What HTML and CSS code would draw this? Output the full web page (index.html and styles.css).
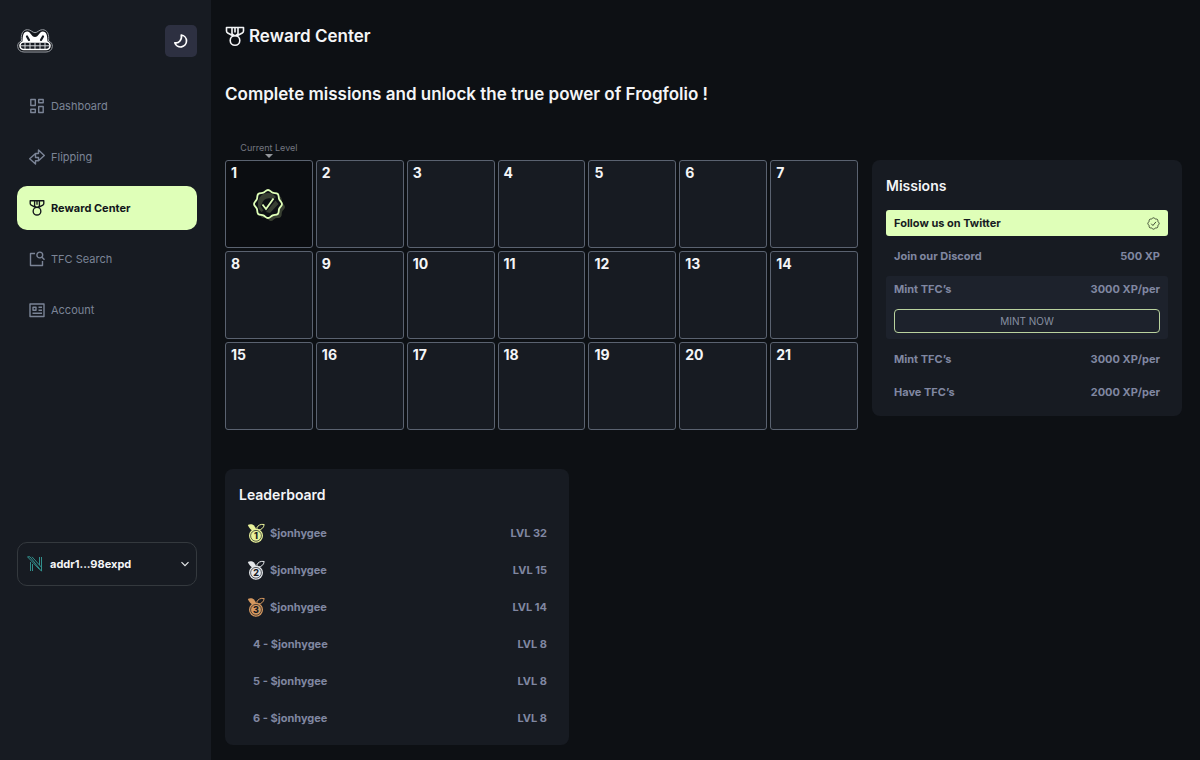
FILE: index.html
```html
<!DOCTYPE html>
<html lang="en">
<head>
<meta charset="utf-8">
<meta name="viewport" content="width=device-width, initial-scale=1">
<title>Reward Center</title>
<link rel="stylesheet" href="styles.css">
</head>
<body>
<svg class="symbols" aria-hidden="true">
  <symbol id="medal" viewBox="0 0 20 20">
    <path d="M1.500 1h17v3.500c0 1-.4 1.600-1.200 2L12.500 9h-5L2.700 6.500c-.8-.4-1.200-1-1.200-2zM7 1v6.500L9 9M13 1v6.500L11 9M10 1v5"/>
    <circle cx="10" cy="14" r="4.800"/>
  </symbol>
  <symbol id="seal" viewBox="0 0 32 32">
    <path d="M16 2c2 0 2.900 2 4.600 2.700s3.800-.1 5.200 1.300.6 3.500 1.300 5.200S30 14 30 16s-2.200 3.100-2.900 4.800.1 3.800-1.300 5.200-3.500.6-5.200 1.300S18 30 16 30s-2.900-2-4.600-2.700-3.800.1-5.200-1.300-.6-3.500-1.300-5.200S2 18 2 16s2.200-3.100 2.900-4.800S4.800 7.400 6.200 6s3.500-.6 5.200-1.300S14 2 16 2z"/>
  </symbol>
  <symbol id="award" viewBox="0 0 18 20">
    <path class="award-fill" d="M.8 2C2.500 .8 5.500 1 7 2.500L9 5.500 6 8C4 7 2 5 .8 2z"/>
    <path class="award-line" d="M17.200 1.500c-3.500-.6-6 .5-7.500 3.500l1.300 2C14.500 6.800 16.700 5 17.200 1.500z"/>
    <circle class="award-fill" cx="9" cy="12.800" r="7"/>
    <circle class="award-ring" cx="9" cy="12.800" r="5.400"/>
  </symbol>
</svg>
<div class="app">
  <aside class="sidebar">
    <div class="brand">
      <svg class="logo" viewBox="0 0 36 24" role="img" aria-label="Frogfolio">
        <path class="logo-edge" d="M4.500 12C3.500 5 6 .7 10.500 .7c3.500 0 5 3 7.500 3s4-3 7.500-3C30 .7 32.500 5 31.500 12c2.800 1 4 3 3.800 5.500C35 21 32.500 23 29 23H7C3.500 23 1 21 .7 17.500.5 15 1.700 13 4.500 12z"/>
        <path class="logo-face" d="M5.500 14C5.500 6 6.500 2.500 10.300 2.500c3.200 0 4.200 5.500 7.700 5.500s4.500-5.500 7.700-5.500c3.800 0 4.800 3.500 4.800 11.500z"/>
        <path class="logo-eye" d="M10 7.500l2 3.500M26 7.500l-2 3.500"/>
        <rect class="logo-mouth" x="3" y="13" width="30" height="7.500" rx="3.700"/>
        <path class="logo-teeth" d="M4 16.800h28M8 13.500v6.500M13 13.500v6.500M18 13.500v6.500M23 13.500v6.500M28 13.500v6.500"/>
      </svg>
      <button class="theme" type="button" aria-label="Toggle theme">
        <svg class="icon moon" viewBox="0 0 16 16"><path d="M8.300 2a6 6 0 1 1-6.500 7.800c4 1 7.500-3 6.500-7.800z"/></svg>
      </button>
    </div>
    <nav class="nav">
      <a class="nav-item" href="#">
        <svg class="icon" viewBox="0 0 16 16"><path d="M1.800 1.500h4.500v6H1.800zM9.700 1.500h4.500v3.200H9.700zM1.800 11.300h4.500v3.200H1.800zM9.700 8.500h4.500v6H9.700z"/></svg>
        Dashboard</a>
      <a class="nav-item" href="#">
        <svg class="icon" viewBox="0 0 16 16"><path d="M9.500 1v3.500H6.500L.7 9.800l5.800 5.200v-3.300h3l5.800-5.200zM6.500 4.500v4h3v3.200"/></svg>
        Flipping</a>
      <a class="nav-item nav-item-active" href="#" aria-current="page">
        <svg class="icon icon-medal"><use href="#medal"/></svg>
        Reward Center</a>
      <a class="nav-item" href="#">
        <svg class="icon" viewBox="0 0 16 16"><path d="M6 2.500H1.500v12h12V10"/><circle cx="10.800" cy="4" r="2.900"/><path d="M13 6.200l2.500 2.500"/></svg>
        TFC Search</a>
      <a class="nav-item" href="#">
        <svg class="icon" viewBox="0 0 16 16"><path d="M1 2h14v12.500H1zM4 5.200h3v3H4zM9.500 5.300H13M9.500 8.200H13M3.500 11.300H13"/></svg>
        Account</a>
    </nav>
    <button class="wallet" type="button">
      <svg class="wallet-logo" viewBox="0 0 16 16"><path d="M.5 .8l12 12.700M.5 .8h2.500l11.500 14.500M5 .8l9.500 10.500M3.500 6v9M5.500 8v7M12.500 1v8M14.500 1v14"/></svg>
      <span class="wallet-address">addr1...98expd</span>
      <svg class="chevron" viewBox="0 0 10 10"><path d="M1.500 3.200L5 6.700l3.500-3.500"/></svg>
    </button>
  </aside>

  <main class="main">
    <header class="title">
      <svg class="icon title-icon"><use href="#medal"/></svg>
      <h1>Reward Center</h1>
    </header>
    <h2 class="lead">Complete missions and unlock the true power of Frogfolio !</h2>

    <div class="top">
      <ol class="levels">
        <li class="level level-current"><span class="marker">Current Level</span>1
          <svg class="badge" viewBox="0 0 36 36" role="img" aria-label="Completed">
            <use class="badge-shade" href="#seal" x="4" y="4" width="32" height="32"/>
            <use class="badge-body" href="#seal" x="1" y="1" width="32" height="32"/>
            <path class="badge-shadow" d="M7 17a10 10 0 0 1 18-7l-3 2.500a7 7 0 0 0-11 4.500l-1.500 2 3 4.500-2 1.500a9 9 0 0 1-3.500-8zM15 25l9.500-11.500 3 3.500-8.500 9z"/>
            <path class="badge-check" d="M11.500 17.500l3.500 4.500 7.500-10.500"/>
          </svg>
        </li>
        <li class="level">2</li><li class="level">3</li><li class="level">4</li><li class="level">5</li><li class="level">6</li><li class="level">7</li>
        <li class="level">8</li><li class="level">9</li><li class="level">10</li><li class="level">11</li><li class="level">12</li><li class="level">13</li><li class="level">14</li>
        <li class="level">15</li><li class="level">16</li><li class="level">17</li><li class="level">18</li><li class="level">19</li><li class="level">20</li><li class="level">21</li>
      </ol>

      <section class="card missions">
        <h3>Missions</h3>
        <ul class="mission-list">
          <li class="mission mission-done"><div class="mission-row"><span>Follow us on Twitter</span>
            <svg class="done" viewBox="0 0 32 32" role="img" aria-label="Done"><use href="#seal" width="32" height="32"/><path d="M10.500 16.500l4 4.500 7.500-9"/></svg></div></li>
          <li class="mission"><div class="mission-row"><span>Join our Discord</span><span>500 XP</span></div></li>
          <li class="mission mission-open"><div class="mission-row"><span>Mint TFC’s</span><span>3000 XP/per</span></div>
            <button class="mint" type="button">MINT NOW</button></li>
          <li class="mission"><div class="mission-row"><span>Mint TFC’s</span><span>3000 XP/per</span></div></li>
          <li class="mission"><div class="mission-row"><span>Have TFC’s</span><span>2000 XP/per</span></div></li>
        </ul>
      </section>
    </div>

    <section class="card leaderboard">
      <h3>Leaderboard</h3>
      <ul class="ranks">
        <li class="rank"><svg class="award gold" viewBox="0 0 18 20"><use href="#award"/><text x="9" y="16">1</text></svg><span class="name">$jonhygee</span><span>LVL 32</span></li>
        <li class="rank"><svg class="award silver" viewBox="0 0 18 20"><use href="#award"/><text x="9" y="16">2</text></svg><span class="name">$jonhygee</span><span>LVL 15</span></li>
        <li class="rank"><svg class="award bronze" viewBox="0 0 18 20"><use href="#award"/><text x="9" y="16">3</text></svg><span class="name">$jonhygee</span><span>LVL 14</span></li>
        <li class="rank rank-plain"><span class="name">4 - $jonhygee</span><span>LVL 8</span></li>
        <li class="rank rank-plain"><span class="name">5 - $jonhygee</span><span>LVL 8</span></li>
        <li class="rank rank-plain"><span class="name">6 - $jonhygee</span><span>LVL 8</span></li>
      </ul>
    </section>
  </main>
</div>
</body>
</html>
```
FILE: styles.css
```css
* { box-sizing: border-box; }
body {
  margin: 0;
  background: #0d1014;
  color: #f4f5f7;
  font: 700 11px/16px Inter, "Liberation Sans", sans-serif;
}
h1, h2, h3, ul, ol { margin: 0; padding: 0; list-style: none; }
button { font: inherit; cursor: pointer; }
svg { fill: none; flex: none; }
.symbols { position: absolute; width: 0; height: 0; }

.app { display: flex; min-height: 100vh; }

.sidebar {
  flex: none;
  width: 211px;
  padding: 25px 14px 24px 17px;
  background: #171b22;
}
.brand { display: flex; align-items: center; justify-content: space-between; }
.logo { width: 36px; height: 24px; }
.logo-edge { fill: #12151a; stroke: #999da3; stroke-width: 1; }
.logo-face { fill: #fff; }
.logo-eye { stroke: #171b22; stroke-width: 2.2; stroke-linecap: round; }
.logo-mouth { fill: #171b22; stroke: #fff; stroke-width: 1.6; }
.logo-teeth { stroke: #d5d7da; stroke-width: 1; }
.theme {
  display: grid;
  place-items: center;
  width: 32px;
  height: 32px;
  padding: 0;
  border: 0;
  border-radius: 5px;
  background: #2d3041;
  color: #fff;
}
.icon {
  width: 16px;
  height: 16px;
  stroke: currentColor;
  stroke-width: 1.4;
  stroke-linejoin: round;
}
.moon { stroke-width: 1.7; }

.nav { display: flex; flex-direction: column; gap: 7px; margin-top: 27px; }
.nav-item {
  display: flex;
  align-items: center;
  gap: 6px;
  height: 44px;
  padding: 0 12px;
  border-radius: 10px;
  color: #7b8496;
  font-weight: 400;
  text-decoration: none;
}
.nav-item-active { background: #dfffb8; color: #12161b; font-weight: 700; }
.icon-medal { height: 18px; stroke-width: 1.7; }

.wallet {
  display: flex;
  align-items: center;
  gap: 7px;
  width: 100%;
  height: 44px;
  margin-top: 210px;
  padding: 0 6px 0 9px;
  border: 1px solid #34393e;
  border-radius: 10px;
  background: none;
  color: #f4f5f7;
}
.wallet-logo { width: 16px; height: 16px; stroke: #328f8c; stroke-width: 1; }
.wallet-address { flex: 1; text-align: left; }
.chevron { width: 10px; height: 10px; stroke: #e6e8ea; stroke-width: 1.2; }

.main { flex: 1; min-width: 0; padding: 24px 18px 15px 14px; }
.title { display: flex; align-items: center; gap: 4px; }
.title-icon { width: 20px; height: 21px; stroke-width: 1.6; }
.title h1, .lead { font-size: 17px; line-height: 24px; font-weight: 600; }
.lead { margin-top: 34px; }

.top { display: flex; align-items: flex-start; gap: 14px; margin-top: 54px; }
.levels { flex: 1; display: grid; grid-template-columns: repeat(7, 1fr); gap: 3px; }
.level {
  position: relative;
  aspect-ratio: 1;
  padding: 3px 5px;
  border: 1px solid #5a6270;
  border-radius: 3px;
  background: #171b22;
  font-size: 14px;
  line-height: 18px;
}
.level-current { background: #0b0d11; }
.marker {
  position: absolute;
  bottom: 100%;
  left: 0;
  right: 0;
  padding-bottom: 7px;
  color: #737780;
  font-size: 9px;
  line-height: 12px;
  font-weight: 400;
  text-align: center;
}
.marker::after {
  content: "";
  position: absolute;
  bottom: 3px;
  left: calc(50% - 4px);
  border: 4px solid transparent;
  border-top-color: #94979c;
  border-bottom: 0;
}
.badge { display: block; width: 36px; height: 36px; margin: 5px auto 0; }
.badge-shade { fill: #383f32; }
.badge-body { fill: #0d1014; stroke: #dfffb8; stroke-width: 1.8; }
.badge-shadow { fill: #383f32; }
.badge-check { stroke: #dfffb8; stroke-width: 1.8; }

.card { border-radius: 8px; background: #171b22; }
.card h3 { font-size: 14px; line-height: 20px; font-weight: 600; }
.missions { flex: none; width: 310px; padding: 16px 14px 11px; }
.mission-list { display: flex; flex-direction: column; gap: 7px; margin-top: 14px; }
.mission { padding: 0 8px; border-radius: 3px; color: #8087a1; }
.mission-row { display: flex; align-items: center; justify-content: space-between; height: 26px; }
.mission-done { background: #dfffb8; color: #171b22; }
.mission-open { padding-bottom: 6px; background: #1d222c; }
.done { width: 13px; height: 13px; stroke: #3b4730; stroke-width: 2.4; }
.mint {
  display: block;
  width: 100%;
  height: 24px;
  margin-top: 7px;
  padding: 0;
  border: 1px solid #b9d29e;
  border-radius: 4px;
  background: none;
  color: #8790a1;
  font-size: 10px;
  font-weight: 400;
}

.leaderboard { width: 344px; margin-top: 39px; padding: 16px 22px 8px 14px; }
.ranks { margin-top: 10px; }
.rank {
  display: flex;
  align-items: center;
  gap: 5px;
  height: 37px;
  padding-left: 8px;
  color: #8087a1;
}
.rank-plain { padding-left: 14px; }
.name { flex: 1; }
.award { width: 18px; height: 20px; color: #e9f29a; }
.award text {
  fill: #171b22;
  font-size: 9px;
  font-weight: 800;
  text-anchor: middle;
}
.award-fill { fill: currentColor; }
.award-line { stroke: currentColor; stroke-width: 1; }
.award-ring { stroke: #171b22; stroke-width: 0.7; }
.silver { color: #e4e7ea; }
.bronze { color: #d5985f; }
```
